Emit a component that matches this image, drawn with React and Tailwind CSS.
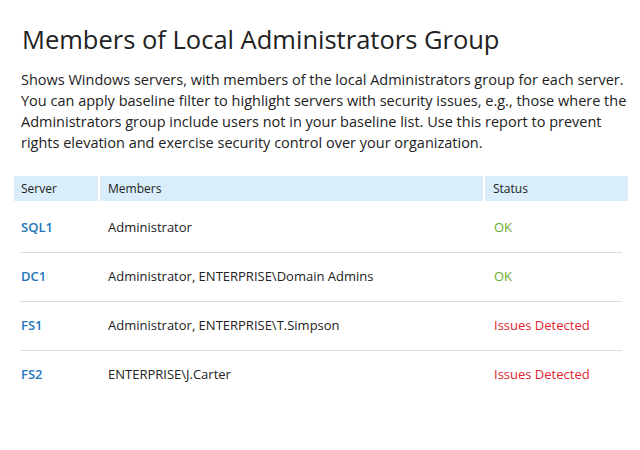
import React from 'react';

const rows = [
  { server: 'SQL1', members: 'Administrator', status: 'OK' },
  { server: 'DC1', members: 'Administrator, ENTERPRISE\\Domain Admins', status: 'OK' },
  { server: 'FS1', members: 'Administrator, ENTERPRISE\\T.Simpson', status: 'Issues Detected' },
  { server: 'FS2', members: 'ENTERPRISE\\J.Carter', status: 'Issues Detected' },
];

const App = () => {
  return (
    <div className="w-[640px] h-[450px] bg-white font-['Open_Sans',sans-serif] text-[#222] pt-[22px] pl-[14px] pr-[12px]">
      <h1 className="pl-[8px] text-[25.5px] leading-[34px] text-[#222]">Members of Local Administrators Group</h1>
      <p className="pl-[7px] -mr-[6px] mt-[13px] text-[14.5px] leading-[21px] text-[#222]">
        Shows Windows servers, with members of the local Administrators group for each server. You can apply baseline filter to highlight servers with security issues, e.g., those where the Administrators group include users not in your baseline list. Use this report to prevent rights elevation and exercise security control over your organization.
      </p>

      <div className="mt-[23px] text-[13px]">
        <div className="grid grid-cols-[84px_383px_1fr] gap-x-[2px] h-[25px] text-[12px]">
          <div className="bg-[#d9eefa] pl-[7px] flex items-center">Server</div>
          <div className="bg-[#d9eefa] pl-[8px] flex items-center">Members</div>
          <div className="bg-[#d9eefa] pl-[8px] flex items-center">Status</div>
        </div>
        <div className="mt-[3px]">
          {rows.map((r, i) => (
            <div key={r.server}>
              {i > 0 && <div className="mx-[6px] h-px bg-[#dcdcdc]" />}
              <div className="grid grid-cols-[84px_383px_1fr] gap-x-[2px] h-[48px] items-center">
                <div className="pl-[7px] font-semibold text-[#2276bb]">{r.server}</div>
                <div className="pl-[8px] text-[#222]">{r.members}</div>
                <div className={`pl-[9px] ${r.status === 'OK' ? 'text-[#6cac2c]' : 'text-[#e2252f]'}`}>{r.status}</div>
              </div>
            </div>
          ))}
        </div>
      </div>
    </div>
  );
};

export default App;
